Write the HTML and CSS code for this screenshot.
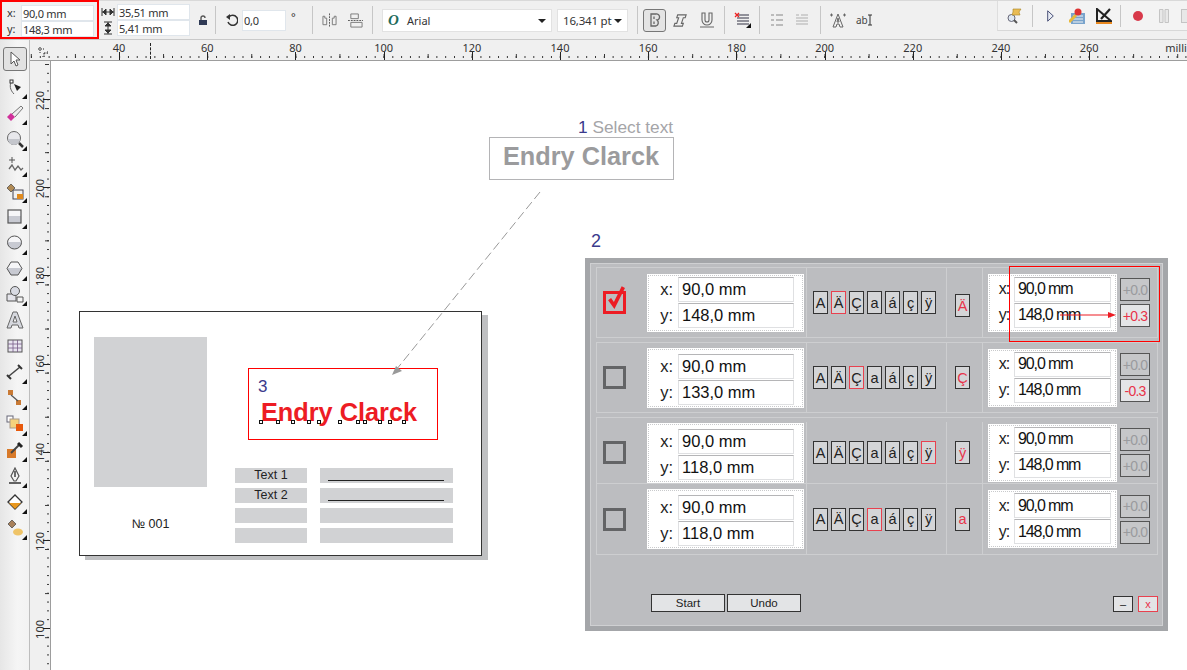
FILE: index.html
```html
<!DOCTYPE html>
<html lang="en">
<head>
<meta charset="utf-8">
<title>Text layout macro</title>
<link rel="stylesheet" href="styles.css">
</head>
<body>
<header class="toolbar">
  <div class="pos">
    <div class="pos-row"><span class="pos-label">x:</span><span class="field pos-field">90,0 mm</span></div>
    <div class="pos-row"><span class="pos-label">y:</span><span class="field pos-field">148,3 mm</span></div>
  </div>
  <div class="dims">
    <div class="dim-row">
      <svg class="dim-icon" viewBox="0 0 14 14"><path d="M1 3v8M13 3v8M1 7h12M2 7l3-3v6zM12 7l-3-3v6z" fill="#333" stroke="#333"/></svg>
      <span class="field dim-field">35,51 mm</span>
    </div>
    <div class="dim-row">
      <svg class="dim-icon" viewBox="0 0 14 14"><path d="M3 1h8M3 13h8M7 1v12M7 2L4 5h6zM7 12L4 9h6z" fill="#333" stroke="#333"/></svg>
      <span class="field dim-field">5,41 mm</span>
    </div>
  </div>
  <svg class="t-lock" viewBox="0 0 10 11"><path d="M3 5V3a2 2 0 0 1 4 0" fill="none" stroke="#555" stroke-width="1.4"/><rect x="1" y="5" width="8" height="5" fill="#2f3a55"/></svg>
  <i class="sep s-lock"></i>
  <svg class="t-rot" viewBox="0 0 12 14"><path d="M3 4a5 5 0 1 1-1 5" fill="none" stroke="#333" stroke-width="1.5"/><path d="M0 4l4-3v6z" fill="#333"/></svg>
  <span class="field rot-field">0,0</span>
  <span class="deg">°</span>
  <i class="sep s-deg"></i>
  <svg class="t-mir1" viewBox="0 0 16 14"><path d="M1 3h2v2h2v7H1zM15 3h-2v2h-2v7h4z" fill="none" stroke="#777"/><path d="M8 0v14" stroke="#555" stroke-dasharray="2 1"/></svg>
  <svg class="t-mir2" viewBox="0 0 16 16"><path d="M3 1h8v5H3zM3 10h12v5H3z" fill="none" stroke="#777"/><path d="M0 8h16" stroke="#555" stroke-dasharray="2 1"/></svg>
  <i class="sep s-mir"></i>
  <div class="combo font-combo"><span class="font-o">O</span><span class="font-name">Arial</span><i class="caret"></i></div>
  <div class="combo size-combo"><span class="size-val">16,341 pt</span><i class="caret"></i></div>
  <i class="sep s-size"></i>
  <div class="bold-btn"><svg viewBox="0 0 14 16" width="14" height="16"><path d="M3 2h5a3 3 0 0 1 1 6 3.500 3.500 0 0 1-1 6H3zM6 4.500v2.500M6 9.500v2.500" fill="none" stroke="#666" stroke-width="1.300"/></svg></div>
  <svg class="t-ital" viewBox="0 0 16 16"><path d="M5 2h9l-1 3h-2l-2 6h2l-1 3H1l1-3h2l2-6H4z" fill="none" stroke="#666" stroke-width="1.200"/></svg>
  <svg class="t-und" viewBox="0 0 16 16"><path d="M3 1h3v7a2 2 0 0 0 4 0V1h3v7a5 5 0 0 1-10 0zM1 15h14" fill="none" stroke="#666" stroke-width="1.100"/></svg>
  <i class="sep s-und"></i>
  <div class="t-lines flyout">
    <svg viewBox="0 0 17 17"><path d="M3 3h12M3 6h12M3 9h12M3 12h12" stroke="#334" stroke-width="1.200"/><path d="M1 1l4 4M5 1L1 5" stroke="#e22" stroke-width="1.300"/></svg>
  </div>
  <i class="sep s-lines"></i>
  <svg class="t-bul" viewBox="0 0 12 14"><path d="M0 2h3M0 7h3M0 12h3M5 2h7M5 7h7M5 12h7" stroke="#bbb" stroke-width="2"/></svg>
  <svg class="t-bul2" viewBox="0 0 12 14"><path d="M0 2h3M5 2h7M0 5h12M0 8h12M0 11h12" stroke="#c4c4c4" stroke-width="1.500"/></svg>
  <i class="sep s-bul"></i>
  <svg class="t-ta" viewBox="0 0 18 18"><path d="M9 3l5 13h-3l-1-3H8l-1 3H4zM9 7l-1 4h2zM1 4h3M2.500 2.500v3M14 4h3M15.500 2.500v3" fill="none" stroke="#666"/></svg>
  <span class="t-ab">ab<svg viewBox="0 0 4 12" width="4" height="12"><path d="M0 1h4M2 1v10M0 11h4" stroke="#333"/></svg></span>
  <div class="macro">
    <svg class="m-find" viewBox="0 0 16 17"><circle cx="5.500" cy="11" r="3.500" fill="#dfe8f2" stroke="#667"/><path d="M8 13l3 3" stroke="#555" stroke-width="2"/><path d="M7 2h8l-2 3 1 3H6l1-3z" fill="#e9bc55" stroke="#a98422" stroke-width=".6"/></svg>
    <i class="sep s-find"></i>
    <svg class="m-play" viewBox="0 0 7 12"><path d="M.7.8l5.600 5.200-5.600 5.200z" fill="#e8ecf4" stroke="#4a5178"/></svg>
    <svg class="m-form" viewBox="0 0 16 16"><rect x="2" y="5" width="14" height="11" fill="#7aa4cc"/><path d="M4 8h10M4 11h10M4 14h10" stroke="#f4f4f4"/><path d="M0 14l7-7" stroke="#e8b93a" stroke-width="3"/><circle cx="9" cy="4" r="3.500" fill="#d33"/></svg>
    <svg class="m-tri" viewBox="0 0 16 16"><path d="M1 1v12h14z" fill="none" stroke="#222" stroke-width="2"/><path d="M5 11L14 1" stroke="#222" stroke-width="2.200"/><path d="M0 14h16v2H0z" fill="#e8871e"/></svg>
    <i class="sep s-tri"></i>
    <i class="m-rec"></i>
    <svg class="m-pause" viewBox="0 0 10 14"><path d="M.5.500h3.500v13H.5zM6 .5h3.500v13H6z" fill="#e8e8e8" stroke="#c4c4c4"/></svg>
    <span class="m-stop"></span>
  </div>
</header>

<div class="workspace">
  <nav class="rail">
    <div class="tool tool-active"><svg viewBox="0 0 16 18"><path d="M4 2v12l3-3 2 5 2-1-2-5h4z" fill="#fff" stroke="#555"/></svg></div>
    <div class="tool flyout"><svg viewBox="0 0 18 18"><path d="M6 3c-3 4-2 9 2 13" fill="none" stroke="#666"/><rect x="4" y="2" width="3" height="3" fill="#fff" stroke="#333"/><path d="M8 6l7 3-4 4z" fill="#222"/></svg></div>
    <div class="tool flyout"><svg viewBox="0 0 18 18"><path d="M6 10l9-8 2 2-8 9" fill="#eee" stroke="#777"/><path d="M1 13l4-4 4 4-4 4z" fill="#d0309a"/></svg></div>
    <div class="tool flyout"><svg viewBox="0 0 18 18"><circle cx="8" cy="8" r="6.500" fill="#e8e8ec" stroke="#666"/><path d="M2 9h12a6 6 0 0 1-12 0z" fill="#c4c6cc"/><path d="M13 13l4 4" stroke="#333" stroke-width="2.500"/></svg></div>
    <div class="tool flyout"><svg viewBox="0 0 18 18"><path d="M3 4h6M6 1v6" stroke="#555"/><path d="M3 13l3-4 3 5 3-4 3 4 2-2" fill="none" stroke="#666" stroke-width="1.300"/></svg></div>
    <div class="tool flyout"><svg viewBox="0 0 18 18"><rect x="7" y="8" width="10" height="9" fill="#f1f1f1" stroke="#445"/><path d="M11 12h6v5h-6z" fill="#e08a1e"/><path d="M1 6l4-4 4 4-4 4z" fill="#b08a55" stroke="#444" stroke-width=".7"/></svg></div>
    <div class="tool flyout"><svg viewBox="0 0 18 18"><defs><linearGradient id="g1" x1="0" y1="0" x2="0" y2="1"><stop offset=".5" stop-color="#f6f6f8"/><stop offset=".5" stop-color="#c8cad2"/></linearGradient></defs><rect x="2" y="2" width="13" height="13" fill="url(#g1)" stroke="#555" stroke-width="1.200"/></svg></div>
    <div class="tool flyout"><svg viewBox="0 0 18 18"><ellipse cx="8.500" cy="8.500" rx="7" ry="6.500" fill="url(#g1)" stroke="#555"/></svg></div>
    <div class="tool flyout"><svg viewBox="0 0 18 18"><path d="M5 2h7l4 6.500-4 6.500H5L1 8.500z" fill="url(#g1)" stroke="#555"/></svg></div>
    <div class="tool flyout"><svg viewBox="0 0 18 18"><path d="M1 9h9v7H1z" fill="#e4e4ea" stroke="#555"/><circle cx="9" cy="6" r="4.500" fill="#d8dae2" stroke="#555"/><path d="M11 12h6v5h-6z" fill="#f4f4f4" stroke="#555"/></svg></div>
    <div class="tool"><svg viewBox="0 0 18 18"><path d="M7 1h4l6 16h-4l-1-3H6l-1 3H1zM9 5l-2 6h4z" fill="#d6d8de" stroke="#666"/></svg></div>
    <div class="tool"><svg viewBox="0 0 18 18"><rect x="2" y="3" width="14" height="12" fill="#e8e4f0" stroke="#555"/><path d="M2 7h14M2 11h14M7 3v12M11.500 3v12" stroke="#775c88" stroke-width=".8"/></svg></div>
    <div class="tool flyout"><svg viewBox="0 0 18 18"><path d="M3 13L14 4" stroke="#444" stroke-width="1.500"/><path d="M1 12l4 4M12 2l4 4" stroke="#333" stroke-width="2"/></svg></div>
    <div class="tool flyout"><svg viewBox="0 0 18 18"><rect x="2" y="1" width="5" height="5" fill="#c97a35"/><rect x="10" y="11" width="5" height="5" fill="#c97a35"/><path d="M5 6l7 6" stroke="#555" stroke-width="1.200"/></svg></div>
    <div class="tool flyout"><svg viewBox="0 0 18 18"><rect x="1" y="1" width="6" height="6" fill="#fff" stroke="#667"/><rect x="4" y="4" width="9" height="9" fill="#f4d27c" stroke="#a98"/><rect x="10" y="9" width="7" height="7" fill="#e8590c"/></svg></div>
    <div class="tool flyout"><svg viewBox="0 0 18 18"><rect x="1" y="8" width="9" height="9" fill="#d87a2a"/><path d="M5 12l8-8" stroke="#444" stroke-width="2"/><path d="M12 2l4 4" stroke="#222" stroke-width="3"/></svg></div>
    <div class="tool flyout"><svg viewBox="0 0 18 18"><path d="M9 1l4 8-3 5H8L5 9z" fill="#f4f4f4" stroke="#555" stroke-width="1.200"/><path d="M9 4v6M3 16h12" stroke="#333" stroke-width="1.400"/></svg></div>
    <div class="tool flyout"><svg viewBox="0 0 18 18"><path d="M2 9l7-7 7 7-7 7z" fill="#fff" stroke="#333" stroke-width="1.300"/><path d="M3 10h12l-6 6z" fill="#e8971e"/></svg></div>
    <div class="tool flyout"><svg viewBox="0 0 18 18"><path d="M2 5l4-4 4 4-4 4z" fill="#a8805a" stroke="#444" stroke-width=".7"/><ellipse cx="12" cy="13" rx="5" ry="3.500" fill="#efc468"/></svg></div>
  </nav>

  <div class="sheet">
    <div class="hruler">
      <span class="corner"><svg viewBox="0 0 10 10" width="10" height="10"><path d="M0 2h6M2 0v6M6 6h4M6 6v4M4 10h3M10 4v3" fill="none" stroke="#222" stroke-dasharray="1.500 1"/></svg></span>
      <i class="cursor-mark"></i>
      <span class="hmark">40</span><span class="hmark">60</span><span class="hmark">80</span><span class="hmark">100</span><span class="hmark">120</span><span class="hmark">140</span><span class="hmark">160</span><span class="hmark">180</span><span class="hmark">200</span><span class="hmark">220</span><span class="hmark">240</span><span class="hmark">260</span>
      <span class="hunit">millimeters</span>
    </div>
    <div class="sheet-body">
      <div class="vruler">
        <span class="vmark"><b>220</b></span><span class="vmark"><b>200</b></span><span class="vmark"><b>180</b></span><span class="vmark"><b>160</b></span><span class="vmark"><b>140</b></span><span class="vmark"><b>120</b></span><span class="vmark"><b>100</b></span>
      </div>
      <main class="canvas">
        <p class="step-one"><span class="num">1</span> <span class="hint">Select text</span></p>
        <div class="source">Endry Clarck</div>
        <p class="step-two num">2</p>

        <section class="card">
          <div class="card-left">
            <div class="photo"></div>
            <p class="card-no">№ 001</p>
          </div>
          <div class="card-right">
            <div class="target">
              <span class="num target-num">3</span>
              <span class="target-text">Endry Clarck</span>
            </div>
            <div class="table">
              <div class="cell">Text 1</div><div class="cell"><i class="rule"></i></div>
              <div class="cell">Text 2</div><div class="cell"><i class="rule"></i></div>
              <div class="cell"></div><div class="cell"></div>
              <div class="cell"></div><div class="cell"></div>
            </div>
          </div>
        </section>

        <section class="panel">
          <div class="row row-a">
            <span class="check check-on"><svg viewBox="0 0 24 24"><path d="M5 11l5 7L20 -2" fill="none" stroke="#ed1c24" stroke-width="4"/></svg></span>
            <div class="xy">
              <span class="xy-l">x:</span><span class="xy-f">90,0 mm</span>
              <span class="xy-l">y:</span><span class="xy-f">148,0 mm</span>
            </div>
            <div class="letters"><b class="chip">A</b><b class="chip on">Ä</b><b class="chip">Ç</b><b class="chip">a</b><b class="chip">á</b><b class="chip">ç</b><b class="chip">ÿ</b></div>
            <div class="single"><b class="chip hot">Ä</b></div>
            <div class="result">
              <div class="xy xy-s">
                <span class="xy-l">x:</span><span class="xy-f">90,0 mm</span>
                <span class="xy-l">y:</span><span class="xy-f">148,0 mm</span>
              </div>
              <div class="deltas"><b class="delta">+0.0</b><b class="delta delta-hot">+0.3</b></div>
            </div>
          </div>
          <div class="row row-b">
            <span class="check"></span>
            <div class="xy">
              <span class="xy-l">x:</span><span class="xy-f">90,0 mm</span>
              <span class="xy-l">y:</span><span class="xy-f">133,0 mm</span>
            </div>
            <div class="letters"><b class="chip">A</b><b class="chip">Ä</b><b class="chip on">Ç</b><b class="chip">a</b><b class="chip">á</b><b class="chip">ç</b><b class="chip">ÿ</b></div>
            <div class="single"><b class="chip hot">Ç</b></div>
            <div class="result">
              <div class="xy xy-s">
                <span class="xy-l">x:</span><span class="xy-f">90,0 mm</span>
                <span class="xy-l">y:</span><span class="xy-f">148,0 mm</span>
              </div>
              <div class="deltas"><b class="delta">+0.0</b><b class="delta delta-hot">-0.3</b></div>
            </div>
          </div>
          <div class="row row-c">
            <span class="check"></span>
            <div class="xy">
              <span class="xy-l">x:</span><span class="xy-f">90,0 mm</span>
              <span class="xy-l">y:</span><span class="xy-f">118,0 mm</span>
            </div>
            <div class="letters"><b class="chip">A</b><b class="chip">Ä</b><b class="chip">Ç</b><b class="chip">a</b><b class="chip">á</b><b class="chip">ç</b><b class="chip on">ÿ</b></div>
            <div class="single"><b class="chip hot">ÿ</b></div>
            <div class="result">
              <div class="xy xy-s">
                <span class="xy-l">x:</span><span class="xy-f">90,0 mm</span>
                <span class="xy-l">y:</span><span class="xy-f">148,0 mm</span>
              </div>
              <div class="deltas"><b class="delta">+0.0</b><b class="delta">+0.0</b></div>
            </div>
          </div>
          <div class="row row-d">
            <span class="check"></span>
            <div class="xy">
              <span class="xy-l">x:</span><span class="xy-f">90,0 mm</span>
              <span class="xy-l">y:</span><span class="xy-f">118,0 mm</span>
            </div>
            <div class="letters"><b class="chip">A</b><b class="chip">Ä</b><b class="chip">Ç</b><b class="chip on">a</b><b class="chip">á</b><b class="chip">ç</b><b class="chip">ÿ</b></div>
            <div class="single"><b class="chip hot">a</b></div>
            <div class="result">
              <div class="xy xy-s">
                <span class="xy-l">x:</span><span class="xy-f">90,0 mm</span>
                <span class="xy-l">y:</span><span class="xy-f">148,0 mm</span>
              </div>
              <div class="deltas"><b class="delta">+0.0</b><b class="delta">+0.0</b></div>
            </div>
          </div>
          <div class="panel-foot">
            <button class="btn">Start</button>
            <button class="btn">Undo</button>
            <button class="win win-min">–</button>
            <button class="win win-close">x</button>
          </div>
        </section>

        <div class="callout"></div>
        <svg class="overlay" viewBox="0 0 1136 609">
          <path d="M489 131L345 309" fill="none" stroke="#999" stroke-dasharray="9 4"/>
          <path d="M341 314l4-9 6 5z" fill="#999"/>
          <path d="M1009 254h49" stroke="#ed1c24" stroke-width="1.200"/>
          <path d="M1057 251l8 3-8 3z" fill="#ed1c24"/>
          <g class="nodes">
            <rect x="208.500" y="359.500" width="3" height="3"/><rect x="225.500" y="359.500" width="3" height="3"/><rect x="240.500" y="359.500" width="3" height="3"/><rect x="256.500" y="359.500" width="3" height="3"/><rect x="266.500" y="359.500" width="3" height="3"/><rect x="287.500" y="359.500" width="3" height="3"/><rect x="305.500" y="359.500" width="3" height="3"/><rect x="312.500" y="359.500" width="3" height="3"/><rect x="327.500" y="359.500" width="3" height="3"/><rect x="337.500" y="359.500" width="3" height="3"/><rect x="351.500" y="359.500" width="3" height="3"/>
          </g>
        </svg>
      </main>
    </div>
  </div>
</div>
</body>
</html>
```

FILE: styles.css
```css
* { box-sizing: border-box; }
html, body { margin: 0; padding: 0; }
body {
  width: 1187px;
  height: 670px;
  overflow: hidden;
  display: flex;
  flex-direction: column;
  background: #fff;
  font-family: "Liberation Sans", Arial, sans-serif;
  color: #222;
}
p { margin: 0; }
svg { display: block; flex: none; }

/* top property bar */
.toolbar {
  height: 40px;
  flex: none;
  display: flex;
  align-items: center;
  background: #f0f0f0;
  border-top: 1px solid #d9d9d9;
  border-bottom: 1px solid #c9c9c9;
  font-family: "Noto Sans", sans-serif;
  font-size: 11px;
  color: #333;
  position: relative;
}
.field {
  display: flex;
  align-items: center;
  background: #fff;
  border: 1px solid #e0e6ec;
  padding-left: 1px;
  line-height: 1;
  letter-spacing: -0.300px;
}
.pos {
  width: 99px;
  height: 39px;
  margin-top: -1px;
  border: 2px solid #f00;
  padding: 3px 0 0 0;
}
.pos-row { display: flex; height: 16px; }
.pos-label { width: 19px; padding-left: 5px; line-height: 15px; }
.pos-field { width: 73px; }
.dims { margin-left: 2px; }
.dim-row { display: flex; align-items: center; height: 16px; }
.dim-icon { width: 14px; height: 14px; margin-right: 2px; }
.dim-field { width: 73px; height: 16px; }
.t-lock { width: 10px; height: 11px; margin-left: 8px; }
.sep { display: block; flex: none; width: 1px; height: 28px; background: #c6c6c6; }
.s-lock { margin-left: 7px; }
.t-rot { width: 12px; height: 14px; margin-left: 10px; }
.rot-field { width: 44px; height: 21px; margin-left: 4px; }
.deg { width: 6px; margin-left: 5px; margin-top: -8px; }
.s-deg { margin-left: 15px; }
.t-mir1 { width: 15px; height: 14px; margin-left: 9px; }
.t-mir2 { width: 15px; height: 15px; margin-left: 11px; }
.s-mir { margin-left: 9px; }
.combo {
  display: flex;
  align-items: center;
  height: 23px;
  background: #fff;
  border: 1px solid #e2e2e2;
  margin-top: 1px;
}
.font-combo { width: 170px; margin-left: 9px; }
.font-o { width: 24px; padding-left: 5px; font: italic bold 15px "Liberation Serif", serif; color: #1f6b5b; }
.font-name { flex: 1; }
.caret {
  display: block;
  flex: none;
  width: 0;
  height: 0;
  margin-right: 5px;
  border: 4px solid transparent;
  border-top: 4px solid #222;
  border-bottom: 0;
}
.size-combo { width: 71px; margin-left: 5px; padding-left: 5px; font-size: 11.500px; letter-spacing: -0.200px; }
.size-val { flex: 1; white-space: nowrap; }
.s-size { margin-left: 9px; }
.bold-btn {
  display: flex;
  align-items: center;
  justify-content: center;
  width: 23px;
  height: 23px;
  margin-left: 5px;
  background: #e4e4e4;
  border: 1px solid #777;
  border-radius: 3px;
}
.t-ital { width: 15px; height: 15px; margin-left: 7px; }
.t-und { width: 16px; height: 16px; margin-left: 11px; }
.s-und { margin-left: 9px; }
.t-lines { width: 17px; height: 17px; margin-left: 9px; position: relative; }
.s-lines { margin-left: 8px; }
.t-bul { width: 12px; height: 14px; margin-left: 11px; }
.t-bul2 { width: 12px; height: 14px; margin-left: 13px; }
.s-bul { margin-left: 12px; }
.t-ta { width: 18px; height: 18px; margin-left: 8px; }
.t-ab { display: flex; align-items: center; margin-left: 9px; font-size: 10px; color: #444; }
.macro {
  margin-left: auto;
  width: 190px;
  height: 30px;
  align-self: flex-start;
  display: flex;
  align-items: center;
  background: #f3f3f3;
  border-left: 1px solid #dedede;
  border-bottom: 1px solid #d8d8d8;
  overflow: hidden;
}
.m-find { width: 16px; height: 17px; margin-left: 8px; }
.s-find { margin-left: 10px; height: 22px; }
.m-play { width: 7px; height: 12px; margin-left: 14px; }
.m-form { width: 16px; height: 16px; margin-left: 15px; }
.m-tri { width: 16px; height: 16px; margin-left: 11px; }
.s-tri { margin-left: 8px; height: 22px; }
.m-rec {
  display: block;
  flex: none;
  width: 10px;
  height: 10px;
  margin-left: 12px;
  border-radius: 50%;
  background: #d8394a;
}
.m-pause { width: 10px; height: 14px; margin-left: 16px; }
.m-stop {
  flex: none;
  width: 12px;
  height: 14px;
  margin-left: 12px;
  background: #e8e8e8;
  border: 1px solid #c4c4c4;
}

/* main area */
.workspace { flex: 1; display: flex; min-height: 0; }
.rail {
  width: 30px;
  flex: none;
  padding-top: 7px;
  display: flex;
  flex-direction: column;
  align-items: center;
  background: linear-gradient(90deg, #e6e6e6, #f5f5f5 60%, #f2f2f2);
  border-right: 1px solid #bdbdbd;
}
.tool {
  flex: none;
  width: 24px;
  height: 25.940px;
  display: flex;
  align-items: center;
  justify-content: center;
  position: relative;
}
.tool svg { width: 18px; height: 18px; }
.tool-active {
  height: 24px;
  margin-bottom: 3px;
  background: #e2e2e2;
  border: 1px solid #777;
  border-radius: 3px;
}
.flyout::after {
  content: "";
  position: absolute;
  right: 0;
  bottom: 1px;
  width: 0;
  height: 0;
  border-left: 5px solid transparent;
  border-bottom: 5px solid #111;
}
.sheet { flex: 1; min-width: 0; display: flex; flex-direction: column; }

.hruler {
  height: 21px;
  flex: none;
  display: flex;
  padding-left: 45px;
  position: relative;
  overflow: hidden;
  border-bottom: 1px solid #9d9d9d;
  font-family: "Noto Sans", sans-serif;
  font-size: 11px;
  color: #333;
  background-color: #f0f0f0;
  background-image:
    linear-gradient(90deg, #333 1px, transparent 1px),
    linear-gradient(90deg, #333 1px, transparent 1px);
  background-size: 8.820px 2px, 44.100px 4px;
  background-position: 1px 16px, 0.800px 14px;
  background-repeat: repeat-x;
}
.corner { position: absolute; left: 8px; top: 7px; }
.cursor-mark {
  position: absolute;
  left: 120px;
  top: 3px;
  height: 16px;
  border-left: 1px dashed #222;
}
.hmark {
  flex: none;
  width: 88.200px;
  text-align: center;
  position: relative;
  line-height: 14px;
  padding-top: 1px;
}
.hmark::after {
  content: "";
  position: absolute;
  left: 50%;
  top: 12px;
  height: 8px;
  border-left: 1px solid #222;
}
.hunit { flex: none; margin-left: 32px; line-height: 14px; white-space: nowrap; padding-top: 1px; }

.sheet-body { flex: 1; display: flex; min-height: 0; }
.vruler {
  width: 21px;
  flex: none;
  display: flex;
  flex-direction: column;
  overflow: hidden;
  border-right: 1px solid #9d9d9d;
  font-family: "Noto Sans", sans-serif;
  font-size: 11px;
  color: #333;
  background-color: #f0f0f0;
  background-image:
    linear-gradient(#333 1px, transparent 1px),
    linear-gradient(#333 1px, transparent 1px);
  background-size: 2px 8.820px, 4px 44.100px;
  background-position: 17px 3px, 15px 3px;
  background-repeat: repeat-y;
}
.vmark {
  flex: none;
  height: 88.200px;
  position: relative;
  display: flex;
  align-items: center;
}
.vmark:first-child { margin-top: -6px; }
.vmark b {
  font-weight: 400;
  writing-mode: vertical-rl;
  transform: rotate(180deg);
  line-height: 14px;
  margin-left: 3px;
  margin-top: 2px;
}
.vmark::after {
  content: "";
  position: absolute;
  left: 13px;
  top: 44px;
  width: 7px;
  border-top: 1px solid #222;
}

.canvas { flex: 1; position: relative; overflow: hidden; background: #fff; }
.num { color: #3a3a8c; }
.step-one {
  position: absolute;
  left: 527px;
  top: 55px;
  font-size: 17.300px;
  line-height: 22px;
  white-space: nowrap;
}
.hint { color: #a5a5a8; }
.source {
  position: absolute;
  left: 438px;
  top: 76px;
  width: 185px;
  height: 43px;
  padding-left: 13px;
  border: 1.500px solid #b4b4b6;
  color: #9b9b9d;
  font-weight: 700;
  font-size: 25.300px;
  line-height: 36px;
}
.step-two { position: absolute; left: 540px; top: 169px; font-size: 18px; line-height: 22px; }

.card {
  position: absolute;
  left: 28px;
  top: 250px;
  width: 403px;
  height: 245px;
  padding: 25px 0 0 14px;
  display: flex;
  background: #fff;
  border: 1.500px solid #333;
  box-shadow: 6px 4px 0 #bfc0c2;
}
.card-left { width: 113px; flex: none; }
.photo { height: 150px; background: #d1d2d4; }
.card-no { margin-top: 30px; text-align: center; font-size: 12.500px; line-height: 14px; }
.card-right { margin-left: 28px; }
.target {
  display: flex;
  flex-direction: column;
  width: 190px;
  height: 72px;
  margin: 31px 0 0 13px;
  padding: 8px 0 0 9px;
  border: 1.500px solid #f00;
}
.target-num { font-size: 17px; line-height: 20px; }
.target-text {
  margin-left: 3px;
  font-weight: 700;
  font-size: 25.300px;
  line-height: 30px;
  color: #ed1c24;
  white-space: nowrap;
}
.table {
  display: grid;
  grid-template-columns: 72px 133px;
  grid-auto-rows: 15px;
  column-gap: 13px;
  row-gap: 5px;
  margin-top: 28px;
}
.cell { background: #d1d2d4; font-size: 12.500px; line-height: 14px; text-align: center; position: relative; }
.rule { display: block; width: 116px; height: 12.500px; margin-left: 8px; border-bottom: 1.200px solid #222; }

/* macro dialog */
.panel {
  position: absolute;
  left: 534px;
  top: 197px;
  width: 583px;
  height: 373px;
  padding: 4px 5px 0 6px;
  display: flex;
  flex-direction: column;
  gap: 4px;
  background: #bcbdc0;
  border: 5px solid #a4a6a9;
  outline: 1px solid #cfd0d2;
  outline-offset: -6px;
}
.row {
  display: flex;
  align-items: center;
  flex: none;
  border: 1px solid #cdced0;
}
.row-a, .row-b { height: 71px; }
.row-c { height: 67px; padding-top: 4px; }
.row-d { height: 72px; margin-top: -5px; }
.check {
  flex: none;
  width: 23px;
  height: 23px;
  margin-left: 6px;
  border: 3px solid #636466;
  position: relative;
}
.check-on { border-color: #ed1c24; }
.check svg { position: absolute; left: -1px; top: -5px; width: 22px; height: 22px; overflow: visible; }
.xy {
  flex: none;
  display: grid;
  grid-template-columns: 31px 116px;
  grid-template-rows: 25px 25px;
  row-gap: 1px;
  align-items: center;
  width: 157px;
  height: 60px;
  margin-left: 21px;
  padding-top: 6px;
  background: #fff;
  outline: 1px dotted #c9cacc;
  outline-offset: -2px;
  font-size: 16.500px;
}
.row-a .xy, .xy-s { height: 58px; padding-top: 3px; }
.xy-l { text-align: right; padding-right: 5px; color: #222; }
.xy-f {
  height: 100%;
  display: flex;
  align-items: center;
  padding-left: 3px;
  background: #fff;
  border: 1px solid #dfe0e2;
  border-top-color: #b5b5b7;
  color: #111;
}
.letters {
  flex: none;
  align-self: stretch;
  display: flex;
  align-items: center;
  gap: 3px;
  width: 140px;
  margin-left: 2px;
  padding-left: 6px;
  border-left: 1px solid #cdced0;
}
.chip {
  flex: none;
  width: 15px;
  height: 23px;
  display: flex;
  align-items: center;
  justify-content: center;
  font-weight: 400;
  font-size: 14.500px;
  background: #d4d5d7;
  border: 1.200px solid #333;
}
.on { border-color: #e8414f; }
.hot { color: #e8334a; }
.single {
  flex: none;
  align-self: stretch;
  display: flex;
  align-items: center;
  width: 36px;
  padding-left: 8px;
  border-left: 1px solid #cdced0;
}
.row-a .single .chip { margin-top: 6px; }
.result {
  flex: 1;
  align-self: stretch;
  display: flex;
  align-items: center;
  padding-left: 5px;
  border-left: 1px solid #cdced0;
}
.xy-s {
  grid-template-columns: 26px 97px;
  width: 129px;
  margin-left: 0;
  font-size: 16px;
  letter-spacing: -1.100px;
}
.deltas { display: flex; flex-direction: column; gap: 3px; margin-left: 3px; }
.delta {
  width: 30px;
  height: 23px;
  display: flex;
  align-items: center;
  justify-content: center;
  font-weight: 400;
  font-size: 14px;
  letter-spacing: -0.800px;
  color: #9a9b9e;
  background: #c6c7c9;
  border: 1.200px solid #555;
}
.delta-hot { color: #e8334a; background: #e4e5e7; }
.panel-foot {
  margin-top: auto;
  padding: 0 0 14px 55px;
  display: flex;
  align-items: flex-end;
  gap: 2px;
}
.btn, .win {
  padding: 0;
  font-family: "Liberation Sans", sans-serif;
  background: #e3e4e6;
  border: 1.200px solid #333;
  border-radius: 0;
  color: #222;
}
.btn { width: 74px; height: 18px; font-size: 11.500px; line-height: 14px; }
.win { width: 20px; height: 16px; font-size: 11px; line-height: 11px; }
.win-min { margin-left: auto; margin-right: 3px; }
.win-close { margin-right: 0; color: #e8334a; border-color: #e8414f; }

.callout {
  position: absolute;
  left: 958px;
  top: 205px;
  width: 151px;
  height: 76px;
  border: 1px solid #f00;
}
.overlay { position: absolute; left: 0; top: 0; width: 1136px; height: 609px; pointer-events: none; }
.nodes rect { fill: #fff; stroke: #111; stroke-width: 1; }
```
